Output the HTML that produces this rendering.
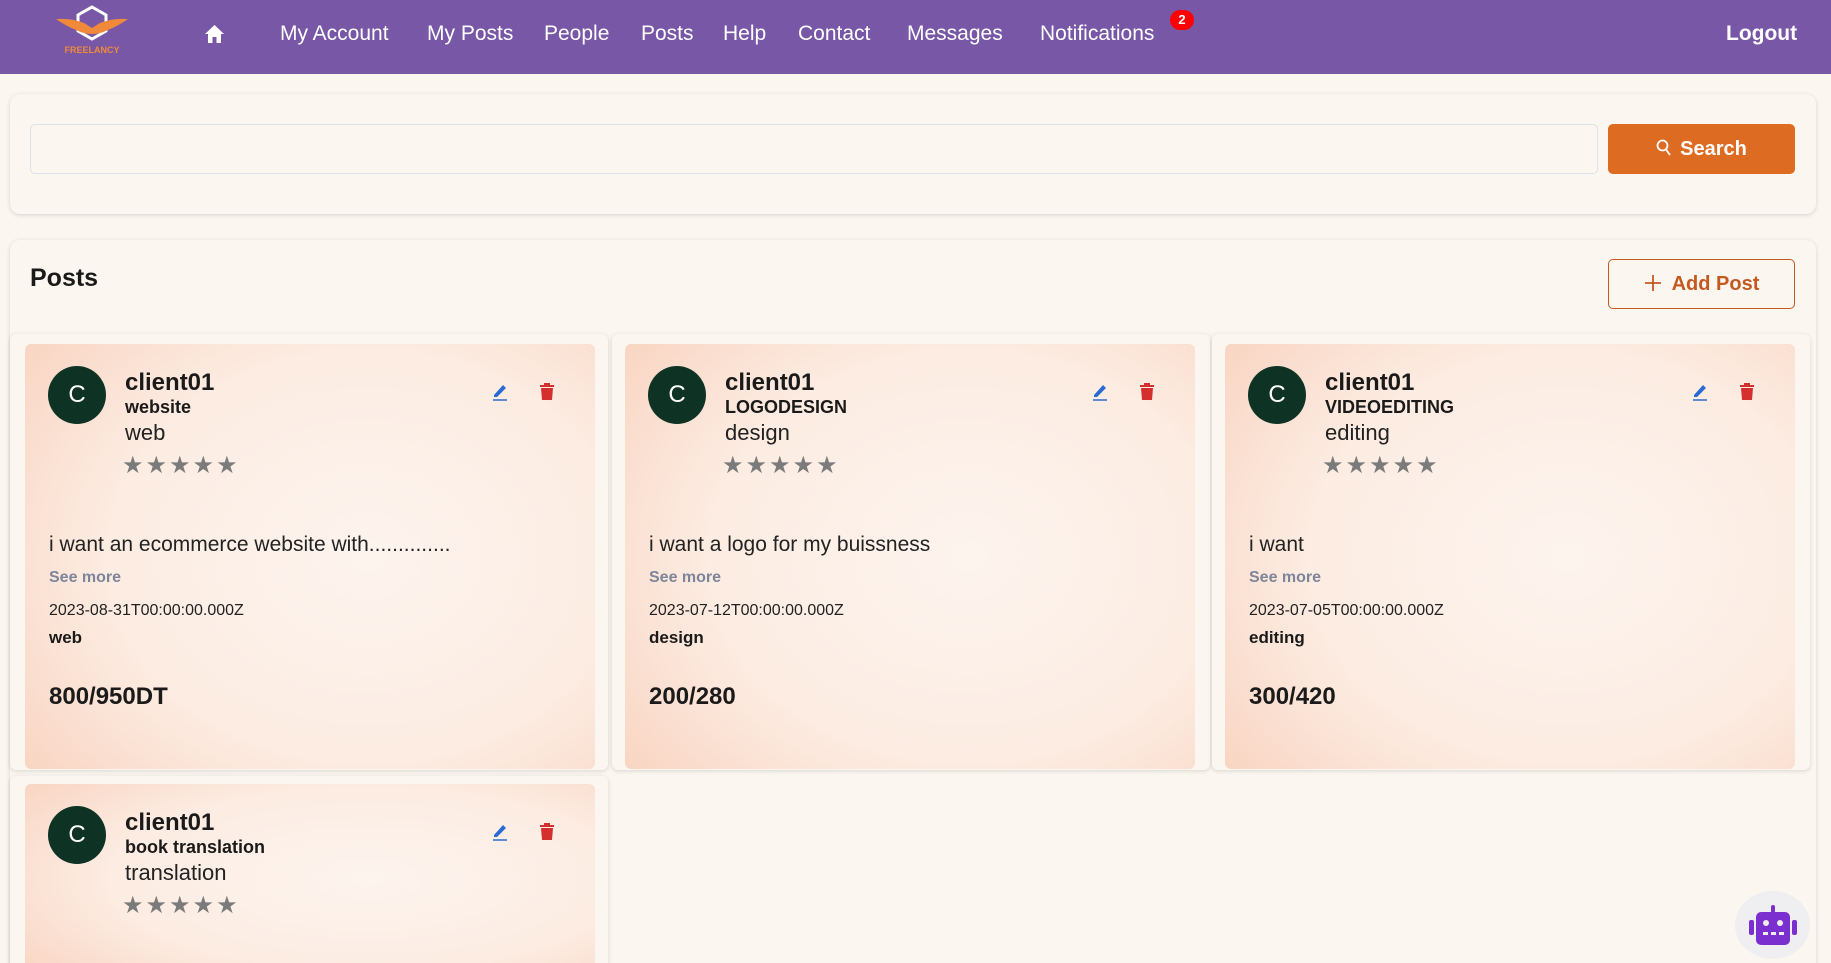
<!DOCTYPE html>
<html style="width:1831px;height:963px;overflow:hidden"><head><meta charset="utf-8"><style>
*{box-sizing:border-box;margin:0;padding:0}
body{width:1831px;height:963px;overflow:hidden;background:#fbf6f0;font-family:"Liberation Sans",sans-serif;position:relative;color:#1a1a1a}
.hdr{position:absolute;left:0;top:0;width:1831px;height:74px;background:#7857a6}
.nav{position:absolute;top:22px;color:#fff;font-size:21px;line-height:24px}
.badge{position:absolute;left:1170px;top:10px;width:24px;height:20px;border-radius:10px;background:#f00;color:#fff;font-size:13px;font-weight:bold;text-align:center;line-height:20px}
.panel{position:absolute;background:#fbf6f0;border-radius:10px;box-shadow:0 1px 4px rgba(0,0,0,.15)}
.cell{position:absolute;background:#fbf6f0;border-radius:6px;box-shadow:0 1px 4px rgba(0,0,0,.14)}
.card{position:absolute;width:570px;border-radius:6px;background:radial-gradient(ellipse 75% 80% at 60% 50%,#fdf4ee 0%,#fcece2 60%,#f9d6c4 100%);overflow:hidden}
.av{position:absolute;left:23px;top:22px;width:58px;height:58px;border-radius:50%;background:#0e3325;color:#fff;font-size:24px;text-align:center;line-height:58px}
.t{position:absolute;white-space:nowrap}
.nm{left:100px;top:25px;font-size:24px;font-weight:bold;line-height:28px}
.cat{left:100px;top:52px;font-size:18px;font-weight:bold;line-height:22px}
.sub{left:100px;top:75px;font-size:22px;line-height:28px;color:#222}
.stars{left:97px;top:108px;font-size:24px;color:#7b7b7b;letter-spacing:2px;line-height:28px}
.desc{left:24px;top:188px;font-size:21px;line-height:26px;color:#222}
.more{left:24px;top:224px;font-size:16px;font-weight:bold;color:#7c8599;line-height:20px}
.date{left:24px;top:257px;font-size:16px;line-height:20px;color:#222}
.tag{left:24px;top:284px;font-size:17px;font-weight:bold;line-height:20px}
.price{left:24px;top:339px;font-size:24px;font-weight:bold;line-height:28px}
.ed{position:absolute;left:465px;top:37px}
.tr{position:absolute;left:514px;top:37px}
</style></head><body>
<div class="hdr">
 <svg style="position:absolute;left:52px;top:4px" width="80" height="52" viewBox="0 0 80 52">
  <path d="M40 3 L54 11 L54 27 L40 35 L26 27 L26 11 Z" fill="none" stroke="#fff" stroke-width="3"/>
  <path d="M4 15 Q20 14 32 19 L40 24 L48 19 Q60 14 76 15 Q66 22 56 26 Q48 30 40 30 Q32 30 24 26 Q14 22 4 15Z" fill="#f08a3a"/>
  <text x="40" y="49" font-size="9" font-weight="bold" fill="#f08a3a" text-anchor="middle" font-family="Liberation Sans">FREELANCY</text>
 </svg>
 <svg style="position:absolute;left:204px;top:24px" width="21" height="20" viewBox="0 0 21 20"><path d="M10.5 1 L20 10 L17 10 L17 19 L12.5 19 L12.5 13 L8.5 13 L8.5 19 L4 19 L4 10 L1 10Z" fill="#fff"/></svg>
 <div class="nav" style="left:280px">My Account</div>
 <div class="nav" style="left:427px">My Posts</div>
 <div class="nav" style="left:544px">People</div>
 <div class="nav" style="left:641px">Posts</div>
 <div class="nav" style="left:723px">Help</div>
 <div class="nav" style="left:798px">Contact</div>
 <div class="nav" style="left:907px">Messages</div>
 <div class="nav" style="left:1040px">Notifications</div>
 <div class="badge">2</div>
 <div class="nav" style="left:1726px;font-weight:bold">Logout</div>
</div>

<div class="panel" style="left:10px;top:94px;width:1806px;height:120px"></div>
<div style="position:absolute;left:30px;top:124px;width:1568px;height:50px;border:1px solid #dde3ea;border-radius:5px;background:#fbf6f0"></div>
<div style="position:absolute;left:1608px;top:124px;width:187px;height:50px;border-radius:5px;background:#de6b22;color:#fff;font-size:20px;font-weight:bold;line-height:50px;text-align:center">
 <svg width="16" height="18" viewBox="0 0 16 18" style="vertical-align:-2px;margin-right:8px"><circle cx="6.5" cy="6.5" r="5" fill="none" stroke="#fff" stroke-width="1.8"/><path d="M10 10.5 L14 16" stroke="#fff" stroke-width="1.8"/></svg>Search</div>

<div class="panel" style="left:10px;top:240px;width:1806px;height:740px;border-radius:10px 10px 0 0"></div>
<div class="t" style="left:30px;top:263px;font-size:25px;font-weight:bold;line-height:30px">Posts</div>
<div style="position:absolute;left:1608px;top:259px;width:187px;height:50px;border:1px solid #c45a20;border-radius:5px;color:#c45a20;font-size:20px;font-weight:bold;line-height:48px;text-align:center">
 <svg width="18" height="18" viewBox="0 0 18 18" style="vertical-align:-2px;margin-right:10px"><path d="M9 1V17M1 9H17" stroke="#c45a20" stroke-width="1.8"/></svg>Add Post</div>

<div class="cell" style="left:10px;top:334px;width:598px;height:436px"></div>
<div class="cell" style="left:612px;top:334px;width:598px;height:436px"></div>
<div class="cell" style="left:1212px;top:334px;width:598px;height:436px"></div>
<div class="cell" style="left:10px;top:776px;width:598px;height:200px"></div>

<div class="card" style="left:25px;top:344px;height:425px">
 <div class="av">C</div><div class="t nm">client01</div><div class="t cat">website</div><div class="t sub">web</div>
 <div class="t stars">★★★★★</div>
 <svg class="ed" width="20" height="20" viewBox="0 0 20 20"><path d="M4 14 L13 4 L16 7 L7 16 L4 16Z" fill="#2a6bd1"/><path d="M3 19H17" stroke="#2a6bd1" stroke-width="1.5"/></svg>
 <svg class="tr" width="16" height="20" viewBox="0 0 16 20"><path d="M5 2H11V4H15V6H1V4H5Z M2 7H14L13 19H3Z" fill="#d32f2f"/></svg>
 <div class="t desc">i want an ecommerce website with..............</div><div class="t more">See more</div>
 <div class="t date">2023-08-31T00:00:00.000Z</div><div class="t tag">web</div><div class="t price">800/950DT</div>
</div>
<div class="card" style="left:625px;top:344px;height:425px">
 <div class="av">C</div><div class="t nm">client01</div><div class="t cat">LOGODESIGN</div><div class="t sub">design</div>
 <div class="t stars">★★★★★</div>
 <svg class="ed" width="20" height="20" viewBox="0 0 20 20"><path d="M4 14 L13 4 L16 7 L7 16 L4 16Z" fill="#2a6bd1"/><path d="M3 19H17" stroke="#2a6bd1" stroke-width="1.5"/></svg>
 <svg class="tr" width="16" height="20" viewBox="0 0 16 20"><path d="M5 2H11V4H15V6H1V4H5Z M2 7H14L13 19H3Z" fill="#d32f2f"/></svg>
 <div class="t desc">i want a logo for my buissness</div><div class="t more">See more</div>
 <div class="t date">2023-07-12T00:00:00.000Z</div><div class="t tag">design</div><div class="t price">200/280</div>
</div>
<div class="card" style="left:1225px;top:344px;height:425px">
 <div class="av">C</div><div class="t nm">client01</div><div class="t cat">VIDEOEDITING</div><div class="t sub">editing</div>
 <div class="t stars">★★★★★</div>
 <svg class="ed" width="20" height="20" viewBox="0 0 20 20"><path d="M4 14 L13 4 L16 7 L7 16 L4 16Z" fill="#2a6bd1"/><path d="M3 19H17" stroke="#2a6bd1" stroke-width="1.5"/></svg>
 <svg class="tr" width="16" height="20" viewBox="0 0 16 20"><path d="M5 2H11V4H15V6H1V4H5Z M2 7H14L13 19H3Z" fill="#d32f2f"/></svg>
 <div class="t desc">i want</div><div class="t more">See more</div>
 <div class="t date">2023-07-05T00:00:00.000Z</div><div class="t tag">editing</div><div class="t price">300/420</div>
</div>
<div class="card" style="left:25px;top:784px;height:190px;border-radius:6px 6px 0 0">
 <div class="av">C</div><div class="t nm">client01</div><div class="t cat">book translation</div><div class="t sub">translation</div>
 <div class="t stars">★★★★★</div>
 <svg class="ed" width="20" height="20" viewBox="0 0 20 20"><path d="M4 14 L13 4 L16 7 L7 16 L4 16Z" fill="#2a6bd1"/><path d="M3 19H17" stroke="#2a6bd1" stroke-width="1.5"/></svg>
 <svg class="tr" width="16" height="20" viewBox="0 0 16 20"><path d="M5 2H11V4H15V6H1V4H5Z M2 7H14L13 19H3Z" fill="#d32f2f"/></svg>
</div>

<div style="position:absolute;left:1735px;top:891px;width:75px;height:68px;border-radius:50%;background:#efeff1"></div>
<svg style="position:absolute;left:1747px;top:903px" width="52" height="44" viewBox="0 0 52 44">
 <rect x="24" y="2" width="4" height="10" rx="2" fill="#7b2fcf"/>
 <rect x="9" y="9" width="34" height="33" rx="5" fill="#7b2fcf"/>
 <rect x="2" y="17" width="5" height="15" rx="2" fill="#7b2fcf"/><rect x="45" y="17" width="5" height="15" rx="2" fill="#7b2fcf"/>
 <circle cx="19" cy="20" r="3" fill="#eee"/><circle cx="33" cy="20" r="3" fill="#eee"/>
 <rect x="16" y="29" width="5" height="3" fill="#eee"/><rect x="24" y="29" width="5" height="3" fill="#eee"/><rect x="32" y="29" width="5" height="3" fill="#eee"/>
</svg>
</body></html>
